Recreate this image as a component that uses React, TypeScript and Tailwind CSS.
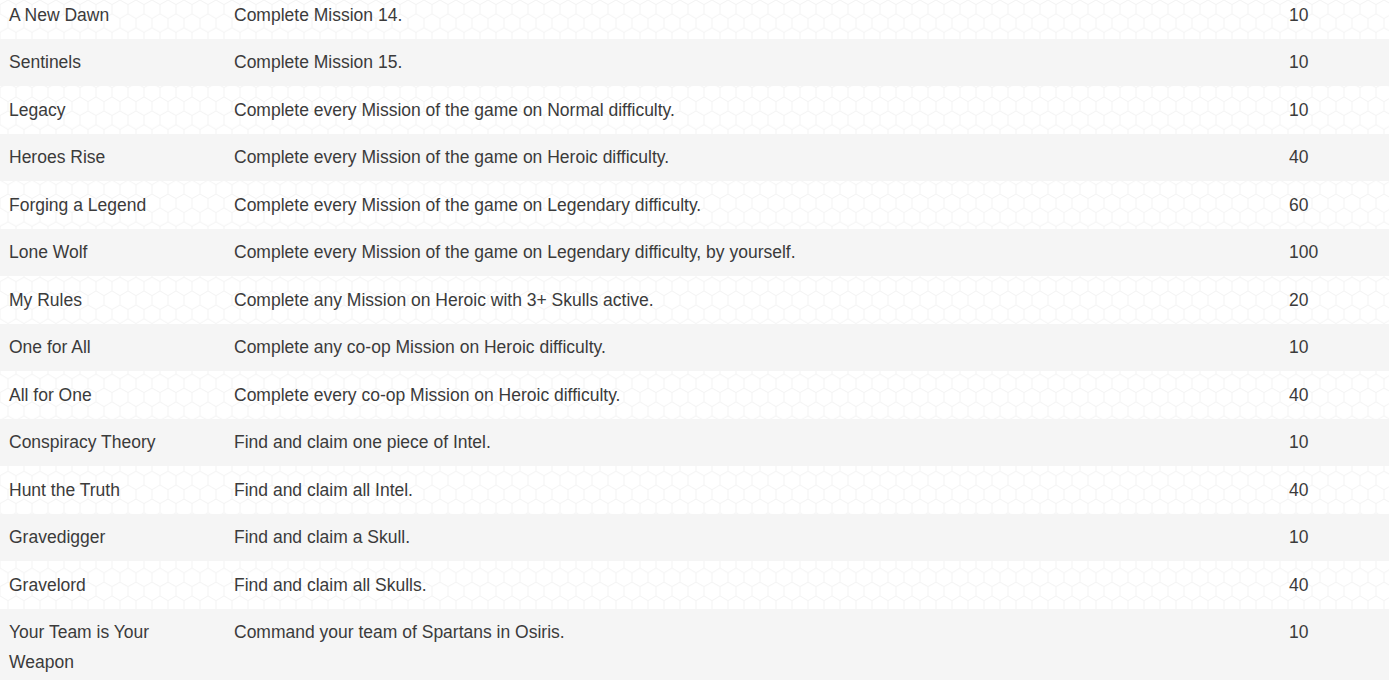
import React from 'react';

const rows = [
  { name: "A New Dawn", desc: "Complete Mission 14.", score: "10" },
  { name: "Sentinels", desc: "Complete Mission 15.", score: "10" },
  { name: "Legacy", desc: "Complete every Mission of the game on Normal difficulty.", score: "10" },
  { name: "Heroes Rise", desc: "Complete every Mission of the game on Heroic difficulty.", score: "40" },
  { name: "Forging a Legend", desc: "Complete every Mission of the game on Legendary difficulty.", score: "60" },
  { name: "Lone Wolf", desc: "Complete every Mission of the game on Legendary difficulty, by yourself.", score: "100" },
  { name: "My Rules", desc: "Complete any Mission on Heroic with 3+ Skulls active.", score: "20" },
  { name: "One for All", desc: "Complete any co-op Mission on Heroic difficulty.", score: "10" },
  { name: "All for One", desc: "Complete every co-op Mission on Heroic difficulty.", score: "40" },
  { name: "Conspiracy Theory", desc: "Find and claim one piece of Intel.", score: "10" },
  { name: "Hunt the Truth", desc: "Find and claim all Intel.", score: "40" },
  { name: "Gravedigger", desc: "Find and claim a Skull.", score: "10" },
  { name: "Gravelord", desc: "Find and claim all Skulls.", score: "40" },
  { name: "Your Team is Your Weapon", desc: "Command your team of Spartans in Osiris.", score: "10" },
];

// faint honeycomb texture behind the table
const HexPattern = () => (
  <svg className="absolute inset-0 w-full h-full" aria-hidden="true">
    <defs>
      <pattern id="hex" width="16" height="27.72" patternUnits="userSpaceOnUse">
        <path
          d="M8 0 L16 4.62 L16 13.86 L8 18.48 L0 13.86 L0 4.62 Z M8 18.48 L8 27.72"
          fill="none"
          stroke="#f4f4f4"
          strokeWidth="1"
        />
      </pattern>
    </defs>
    <rect width="100%" height="100%" fill="url(#hex)" />
  </svg>
);

export default function App() {
  return (
    <div className="relative w-[1389px] h-[680px] overflow-hidden bg-white font-['Liberation_Sans',Arial,sans-serif] text-[17.5px] leading-[30px] text-[#3b3b3b]">
      <HexPattern />
      <table className="relative w-full -mt-[9px] border-collapse">
        <tbody>
          {rows.map((row, i) => (
            <tr key={row.name} className={i % 2 === 1 ? 'bg-[#f5f5f5]' : 'bg-transparent'}>
              <td className="w-[225px] px-[9px] py-[8.75px] align-top">{row.name}</td>
              <td className="px-[9px] py-[8.75px] align-top">{row.desc}</td>
              <td className="w-[109px] px-[9px] py-[8.75px] align-top">{row.score}</td>
            </tr>
          ))}
        </tbody>
      </table>
    </div>
  );
}
